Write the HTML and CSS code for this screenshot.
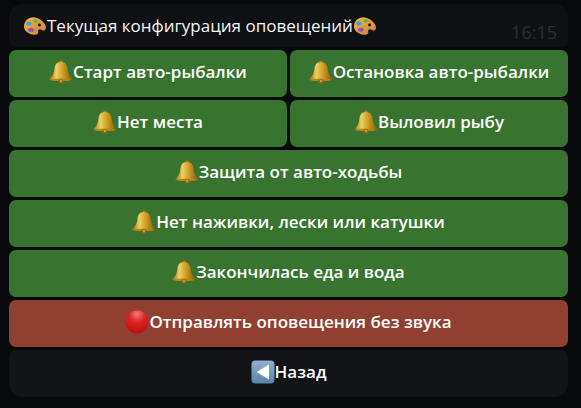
FILE: index.html
```html
<!DOCTYPE html>
<html lang="ru">
<head>
<meta charset="utf-8">
<title>Оповещения</title>
<link rel="stylesheet" href="styles.css">
</head>
<body>
<svg class="defs" width="0" height="0" aria-hidden="true">
  <defs>
    <linearGradient id="bellG" x1="0" y1="0" x2="1" y2="0">
      <stop offset="0" stop-color="#8f6a12"/>
      <stop offset=".3" stop-color="#efd060"/>
      <stop offset=".62" stop-color="#c9981f"/>
      <stop offset="1" stop-color="#7d5808"/>
    </linearGradient>
    <radialGradient id="redG" cx=".5" cy=".15" r=".9">
      <stop offset="0" stop-color="#f27a7a"/>
      <stop offset=".4" stop-color="#e02222"/>
      <stop offset="1" stop-color="#b01010"/>
    </radialGradient>
    <linearGradient id="palG" x1="0" y1="0" x2="1" y2="1">
      <stop offset="0" stop-color="#f0b550"/>
      <stop offset="1" stop-color="#c98428"/>
    </linearGradient>
    <linearGradient id="backG" x1="0" y1="0" x2="0" y2="1">
      <stop offset="0" stop-color="#8fb0cf"/>
      <stop offset="1" stop-color="#5d83a6"/>
    </linearGradient>
    <symbol id="bell" viewBox="0 0 24 24">
      <circle cx="12" cy="2" r="1.700" fill="#a67c14"/>
      <path d="M12 2C7.500 2 5.800 4.800 5.400 8.800c-.4 4-1.200 6.900-4.700 9.600-.9.700-.4 1.700 1 1.900 2.800.5 6.700.8 10.300.8s7.500-.3 10.300-.8c1.400-.2 1.900-1.200 1-1.900-3.500-2.700-4.300-5.600-4.700-9.600C18.200 4.800 16.500 2 12 2z" fill="url(#bellG)"/>
      <ellipse cx="12" cy="19.800" rx="10" ry="1.300" fill="#b5851a"/>
      <circle cx="12" cy="21.500" r="2.200" fill="#99680f"/>
      <circle cx="12" cy="21" r="1" fill="#e0b040"/>
    </symbol>
    <symbol id="palette" viewBox="0 0 24 24">
      <path d="M1 12.500C1 6.500 6.500 2.500 12 3.500c5 .9 10.500 5.500 11 9.500.3 2.600-1.700 4.200-3.600 3.200-1.500-.8-2.900-1.400-3.900-.3-1 1.100.3 2.700-.5 3.700-1.200 1.500-4 1.500-7 .6C4.500 19 1 16.500 1 12.500z" fill="url(#palG)"/>
      <ellipse cx="6" cy="9.500" rx="2.700" ry="2.100" fill="#3fa0dc"/>
      <ellipse cx="12.500" cy="7" rx="2.200" ry="1.700" fill="#5cb84a"/>
      <ellipse cx="8" cy="15.800" rx="2.900" ry="2" fill="#8e4fc4"/>
      <ellipse cx="16.500" cy="11" rx="1.500" ry="1.400" fill="#1d1408"/>
      <ellipse cx="20.500" cy="13.500" rx="1.800" ry="1.900" fill="#e8806a"/>
    </symbol>
    <symbol id="red" viewBox="0 0 24 24">
      <circle cx="12" cy="12" r="11.500" fill="url(#redG)"/>
    </symbol>
    <symbol id="back" viewBox="0 0 24 24">
      <rect x=".5" y=".5" width="23" height="23" rx="4" fill="url(#backG)"/>
      <path d="M5.500 12 18 4.500v15z" fill="#fff"/>
    </symbol>
  </defs>
</svg>
<main class="chat">
  <div class="bubble">
    <svg class="emoji"><use href="#palette"/></svg><span>Текущая конфигурация оповещений</span><svg class="emoji"><use href="#palette"/></svg>
    <time class="time">16:15</time>
  </div>
  <div class="keyboard">
    <button class="key"><svg class="emoji"><use href="#bell"/></svg>Старт авто-рыбалки</button>
    <button class="key"><svg class="emoji"><use href="#bell"/></svg>Остановка авто-рыбалки</button>
    <button class="key"><svg class="emoji"><use href="#bell"/></svg>Нет места</button>
    <button class="key"><svg class="emoji"><use href="#bell"/></svg>Выловил рыбу</button>
    <button class="key wide"><svg class="emoji"><use href="#bell"/></svg>Защита от авто-ходьбы</button>
    <button class="key wide"><svg class="emoji"><use href="#bell"/></svg>Нет наживки, лески или катушки</button>
    <button class="key wide"><svg class="emoji"><use href="#bell"/></svg>Закончилась еда и вода</button>
    <button class="key wide danger"><svg class="emoji"><use href="#red"/></svg>Отправлять оповещения без звука</button>
    <button class="key wide dark"><svg class="emoji"><use href="#back"/></svg>Назад</button>
  </div>
</main>
</body>
</html>
```
FILE: styles.css
```css
* { box-sizing: border-box; }
html, body { margin: 0; height: 100%; }
body {
  background: #08090b;
  font-family: "Open Sans", "Noto Sans", sans-serif;
  color: #fff;
  overflow: hidden;
}
.defs { position: absolute; }
.chat {
  display: flex;
  flex-direction: column;
  gap: 3px;
  padding: 4px 13px 0 9px;
}
.bubble {
  position: relative;
  display: flex;
  align-items: center;
  height: 43px;
  padding: 0 0 0 14px;
  background: #0f1014;
  border-radius: 14px 14px 6px 6px;
  font-size: 17px;
  line-height: 20px;
  color: #f5f5f5;
}
.time {
  position: absolute;
  right: 11px;
  bottom: 5px;
  font-size: 18px;
  line-height: 20px;
  color: #2a2e33;
}
.emoji {
  flex: none;
  width: 24px;
  height: 24px;
}
.keyboard {
  display: grid;
  grid-template-columns: 1fr 1fr;
  grid-auto-rows: 47px;
  gap: 3px;
}
.key {
  display: flex;
  align-items: center;
  justify-content: center;
  padding: 0 0 3px;
  border: 0;
  border-radius: 7px;
  background: #38742f;
  color: #fff;
  font: 600 17px/20px "Open Sans", "Noto Sans", sans-serif;
}
.wide { grid-column: 1 / -1; }
.danger { background: #913f31; }
.dark {
  background: #121418;
  border-radius: 7px 7px 14px 14px;
}
```
